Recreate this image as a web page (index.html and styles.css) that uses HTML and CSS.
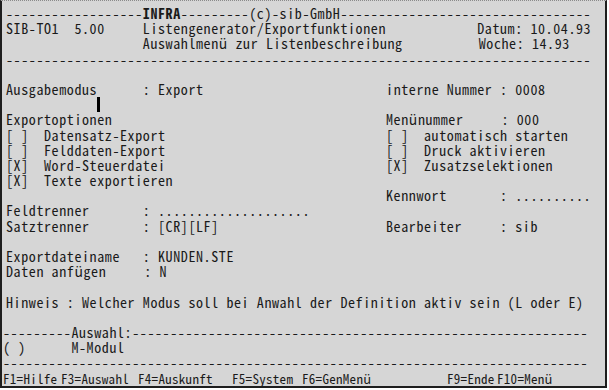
FILE: index.html
```
<!DOCTYPE html>
<html lang="de">
<head>
<meta charset="utf-8">
<title>SIB-TO1 Listengenerator</title>
<link rel="stylesheet" href="styles.css">
</head>
<body>
<div class="screen">
<div class="row">------------------<b class="bold">INFRA</b>---------<span>(c)-sib-GmbH</span>---------------------------------</div>
<div class="row"><span>SIB-TO1</span>  <span>5.00</span>     <span>Listengenerator/Exportfunktionen</span>            <span>Datum: 10.04.93</span></div>
<div class="row">                  <span>Auswahlmenü zur Listenbeschreibung</span>          <span>Woche: 14.93</span></div>
<div class="row">-----------------------------------------------------------------------------</div>
<div class="row"> </div>
<div class="row"><span>Ausgabemodus</span>      <span>: Export</span>                        <span>interne Nummer : 0008</span></div>
<div class="row">            <span class="cursor"></span></div>
<div class="row"><span>Exportoptionen</span>                                    <span>Menünummer     : 000</span></div>
<div class="row"><span>[ ]  Datensatz-Export</span>                             <span>[ ]  automatisch starten</span></div>
<div class="row"><span>[ ]  Felddaten-Export</span>                             <span>[ ]  Druck aktivieren</span></div>
<div class="row"><span>[X]  Word-Steuerdatei</span>                             <span>[X]  Zusatzselektionen</span></div>
<div class="row"><span>[X]  Texte exportieren</span></div>
<div class="row">                                                  <span>Kennwort       : ..........</span></div>
<div class="row"><span>Feldtrenner</span>       <span>: ....................</span></div>
<div class="row"><span>Satztrenner</span>       <span>: [CR][LF]</span>                      <span>Bearbeiter     : sib</span></div>
<div class="row"> </div>
<div class="row"><span>Exportdateiname</span>   <span>: KUNDEN.STE</span></div>
<div class="row"><span>Daten anfügen</span>     <span>: N</span></div>
<div class="row"> </div>
<div class="row"><span>Hinweis : Welcher Modus soll bei Anwahl der Definition aktiv sein (L oder E)</span></div>
<div class="row"> </div>
<div class="row lower">---------<span>Auswahl:</span>------------------------------------------------------------</div>
<div class="row lower"><span>( )</span>      <span>M-Modul</span></div>
<div class="row lower">-----------------------------------------------------------------------------</div>
<div class="fkeys"><span class="fk fk1">F1=Hilfe</span><span class="fk fk3">F3=Auswahl</span><span class="fk fk4">F4=Auskunft</span><span class="fk fk5">F5=System</span><span class="fk fk6">F6=GenMenü</span><span class="fk fk9">F9=Ende</span><span class="fk fk10">F10=Menü</span></div>
</div>
</body>
</html>
```

FILE: styles.css
```
html, body {
  margin: 0;
  padding: 0;
  background: #ffffff;
}

.screen {
  box-sizing: border-box;
  width: 607px;
  height: 388px;
  background: #d6d6d6;
  border-top: 1px dotted #8a8a8a;
  border-left: 2px solid #1e1e1e;
  border-right: 2px solid #1e1e1e;
  border-bottom: 2px solid #1e1e1e;
  padding: 5px 0 0 4px;
  font-family: "Noto Sans Mono CJK JP", "Noto Sans CJK JP", monospace;
  font-feature-settings: "hwid" 1;
  font-size: 14px;
  letter-spacing: 0.6px;
  line-height: 15.2px;
  color: #1a1a1a;
  overflow: hidden;
}

.row {
  white-space: pre;
  height: 15.2px;
}

.lower {
  margin-left: -3px;
}

.bold {
  font-weight: bold;
}

.cursor {
  display: inline-block;
  width: 3px;
  height: 15px;
  background: #000;
  vertical-align: top;
}

.fkeys {
  display: flex;
  height: 15.2px;
  margin-left: -3px;
  white-space: pre;
  font-size: 13px;
  letter-spacing: 0.3px;
}

.fk1 { width: 58px; }
.fk3 { width: 77px; }
.fk4 { width: 94px; }
.fk5 { width: 70px; }
.fk6 { width: 145px; }
.fk9 { width: 50px; }
.fk10 { width: auto; }
```
